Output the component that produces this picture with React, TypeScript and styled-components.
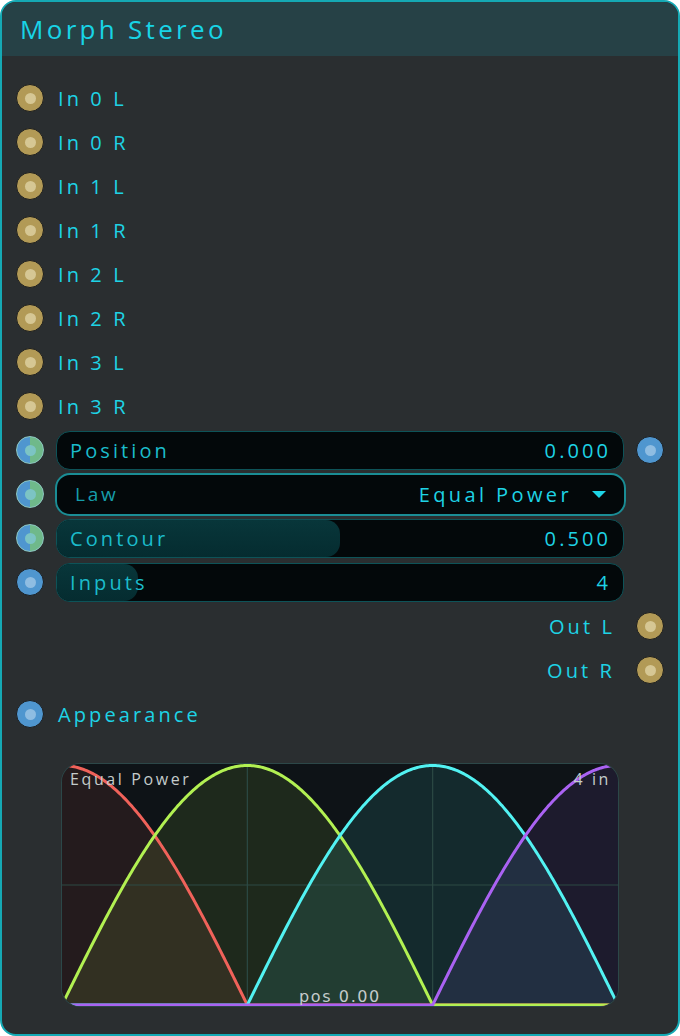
import React from 'react';
import styled, { createGlobalStyle } from 'styled-components';

const GlobalStyle = createGlobalStyle`
	html, body {
		margin: 0;
		padding: 0;
		background: #ffffff;
	}
	* {
		box-sizing: border-box;
	}
`;

type PinKind = 'audio' | 'control' | 'mod';

const INPUTS = ['In 0 L', 'In 0 R', 'In 1 L', 'In 1 R', 'In 2 L', 'In 2 R', 'In 3 L', 'In 3 R'];

const CURVES = ['#f0625a', '#b2f052', '#52f2f2', '#aa62f2'];

const CHART_W = 556;
const CHART_H = 242;

// equal power law, one arch per input, peaks spread over the range
function curveValue(k: number, x: number, count: number) {
	const seg = 1 / (count - 1);
	const peak = k * seg;
	const d = x - peak;
	if (Math.abs(d) > seg) return 0;
	const t = Math.abs(d) / seg;
	return Math.cos((t * Math.PI) / 2);
}

function curvePoints(k: number, count: number) {
	const pts: string[] = [];
	const steps = 360;
	for (let i = 0; i <= steps; i++) {
		const x = i / steps;
		const v = curveValue(k, x, count);
		const px = x * CHART_W;
		const py = 1.5 + (1 - v) * (CHART_H - 2.5);
		pts.push(px.toFixed(2) + ',' + py.toFixed(2));
	}
	return pts;
}

function Pin({ kind }: { kind: PinKind }) {
	return (
		<View.Pin kind={kind}>
			<View.PinDot kind={kind} />
		</View.Pin>
	);
}

function Slider({ label, value, fill, pinRight }: { label: string; value: string; fill: number; pinRight?: boolean }) {
	return (
		<View.SliderRow>
			<Pin kind="mod" />
			<View.Bar>
				{fill > 0 && <View.BarFill style={{ width: fill * 100 + '%' }} />}
				<Text.BarLabel>{label}</Text.BarLabel>
				<Text.BarValue>{value}</Text.BarValue>
			</View.Bar>
			<View.Slot>{pinRight && <Pin kind="control" />}</View.Slot>
		</View.SliderRow>
	);
}

function Chart() {
	const count = 4;
	return (
		<View.Chart>
			<svg width={CHART_W} height={CHART_H} viewBox={`0 0 ${CHART_W} ${CHART_H}`}>
				<rect x={0} y={0} width={CHART_W} height={CHART_H} fill="#0e1317" />
				{CURVES.map((c, k) => {
					const pts = curvePoints(k, count);
					return (
						<polygon
							key={'f' + k}
							points={`0,${CHART_H} ${pts.join(' ')} ${CHART_W},${CHART_H}`}
							fill={c}
							fillOpacity={0.1}
						/>
					);
				})}
				<line x1={CHART_W / 3} y1={0} x2={CHART_W / 3} y2={CHART_H} stroke="#2c4a44" strokeWidth={1.2} />
				<line x1={(CHART_W * 2) / 3} y1={0} x2={(CHART_W * 2) / 3} y2={CHART_H} stroke="#2c4a44" strokeWidth={1.2} />
				<line x1={0} y1={CHART_H / 2} x2={CHART_W} y2={CHART_H / 2} stroke="#2c4a44" strokeWidth={1.2} />
				{CURVES.map((c, k) => (
					<polyline key={'l' + k} points={curvePoints(k, count).join(' ')} fill="none" stroke={c} strokeWidth={3} />
				))}
			</svg>
			<Text.ChartLaw>Equal Power</Text.ChartLaw>
			<Text.ChartCount>4 in</Text.ChartCount>
			<Text.ChartPos>pos 0.00</Text.ChartPos>
		</View.Chart>
	);
}

function App() {
	return (
		<>
			<GlobalStyle />
			<View.Node>
				<View.Header>
					<Text.Title>Morph Stereo</Text.Title>
				</View.Header>
				<View.Body>
					{INPUTS.map((name) => (
						<View.Row key={name}>
							<Pin kind="audio" />
							<Text.Label>{name}</Text.Label>
						</View.Row>
					))}
					<Slider label="Position" value="0.000" fill={0} pinRight />
					<View.SliderRow>
						<Pin kind="mod" />
						<View.Select>
							<Text.SelectLabel>Law</Text.SelectLabel>
							<Text.SelectValue>Equal Power</Text.SelectValue>
							<View.Caret />
						</View.Select>
						<View.Slot />
					</View.SliderRow>
					<Slider label="Contour" value="0.500" fill={0.5} />
					<View.SliderRow>
						<Pin kind="control" />
						<View.Bar>
							<View.BarFill style={{ width: (2 / 14) * 100 + '%' }} />
							<Text.BarLabel>Inputs</Text.BarLabel>
							<Text.BarValue>4</Text.BarValue>
						</View.Bar>
						<View.Slot />
					</View.SliderRow>
					<View.OutRow>
						<Text.Label>Out L</Text.Label>
						<Pin kind="audio" />
					</View.OutRow>
					<View.OutRow>
						<Text.Label>Out R</Text.Label>
						<Pin kind="audio" />
					</View.OutRow>
					<View.Row>
						<Pin kind="control" />
						<Text.Label>Appearance</Text.Label>
					</View.Row>
					<Chart />
				</View.Body>
			</View.Node>
		</>
	);
}

export default App;

const FONT = `"Open Sans", "Liberation Sans", sans-serif`;
const CYAN = '#1ed3e5';

const View = {
	Node: styled.div`
		width: 680px;
		height: 1036px;
		border: 2px solid #15a9b4;
		border-radius: 16px;
		overflow: hidden;
		background-color: #2a2e30;
		font-family: ${FONT};
	`,
	Header: styled.div`
		height: 54px;
		padding-left: 18px;
		display: flex;
		align-items: center;
		background-color: #264146;
	`,
	Body: styled.div`
		padding: 20px 14px 0 14px;
		display: flex;
		flex-direction: column;
	`,
	Row: styled.div`
		height: 44px;
		display: flex;
		align-items: center;
		gap: 14px;
	`,
	OutRow: styled.div`
		height: 44px;
		display: flex;
		align-items: center;
		justify-content: flex-end;
		gap: 21px;
	`,
	SliderRow: styled.div`
		height: 44px;
		display: flex;
		align-items: center;
		gap: 12px;
	`,
	Slot: styled.div`
		width: 28px;
		height: 28px;
		flex-shrink: 0;
	`,
	Pin: styled.div<{ kind: PinKind }>`
		width: 28px;
		height: 28px;
		flex-shrink: 0;
		border-radius: 50%;
		display: flex;
		align-items: center;
		justify-content: center;
		border: ${(p) => (p.kind === 'mod' ? '1.5px solid #8ec8c2' : '1.5px solid #1b1d1e')};
		background: ${(p) =>
			p.kind === 'audio'
				? '#b29a56'
				: p.kind === 'control'
				? '#4f96cf'
				: 'linear-gradient(90deg, #4f96cf 50%, #6fb98a 50%)'};
	`,
	PinDot: styled.div<{ kind: PinKind }>`
		width: 11px;
		height: 11px;
		border-radius: 50%;
		background-color: ${(p) => (p.kind === 'audio' ? '#d6c794' : p.kind === 'control' ? '#8fbde2' : '#7cc4c4')};
	`,
	Bar: styled.div`
		position: relative;
		flex: 1;
		height: 39px;
		border-radius: 14px;
		border: 1px solid #0d5358;
		background-color: #03080a;
		overflow: hidden;
		display: flex;
		align-items: center;
		justify-content: space-between;
		padding: 0 15px 0 13px;
	`,
	BarFill: styled.div`
		position: absolute;
		left: 0;
		top: 0;
		bottom: 0;
		border-radius: 0 14px 14px 0;
		background: linear-gradient(180deg, #08363a 0%, #052c30 100%);
	`,
	Select: styled.div`
		flex: 1;
		height: 43px;
		margin: 0 -2px 0 -1px;
		border-radius: 15px;
		border: 2px solid #1a8d95;
		background-color: #03080a;
		display: flex;
		align-items: center;
		padding: 0 18px 0 18px;
	`,
	Caret: styled.div`
		width: 0;
		height: 0;
		margin-left: 20px;
		border-left: 7px solid transparent;
		border-right: 7px solid transparent;
		border-top: 7px solid ${CYAN};
	`,
	Chart: styled.div`
		position: relative;
		margin: 28px 0 0 46px;
		width: ${CHART_W}px;
		height: ${CHART_H}px;
		border-radius: 18px;
		overflow: hidden;
		box-shadow: 0 0 0 1px #2c4748;
		svg {
			display: block;
		}
	`,
};

const Text = {
	Title: styled.span`
		font-size: 26px;
		letter-spacing: 3.3px;
		color: #18d4e6;
	`,
	Label: styled.span`
		font-size: 20px;
		letter-spacing: 3.1px;
		color: ${CYAN};
	`,
	BarLabel: styled.span`
		position: relative;
		font-size: 20px;
		letter-spacing: 3.1px;
		color: #1bbccb;
	`,
	BarValue: styled.span`
		position: relative;
		font-size: 20px;
		letter-spacing: 3.1px;
		margin-right: -3.1px;
		color: ${CYAN};
	`,
	SelectLabel: styled.span`
		flex: 1;
		font-size: 19px;
		letter-spacing: 2.8px;
		color: #169daa;
	`,
	SelectValue: styled.span`
		font-size: 20px;
		letter-spacing: 3.4px;
		color: ${CYAN};
	`,
	ChartLaw: styled.span`
		position: absolute;
		left: 8px;
		top: 4px;
		font-size: 16px;
		letter-spacing: 2.6px;
		color: #c4cbcb;
	`,
	ChartCount: styled.span`
		position: absolute;
		right: 7px;
		top: 4px;
		font-size: 16px;
		letter-spacing: 2.6px;
		color: #c4cbcb;
	`,
	ChartPos: styled.span`
		position: absolute;
		left: 0;
		right: 0;
		bottom: 0;
		text-align: center;
		font-family: "DejaVu Sans", sans-serif;
		font-size: 16px;
		letter-spacing: 1.6px;
		color: #c4cbcb;
	`,
};
